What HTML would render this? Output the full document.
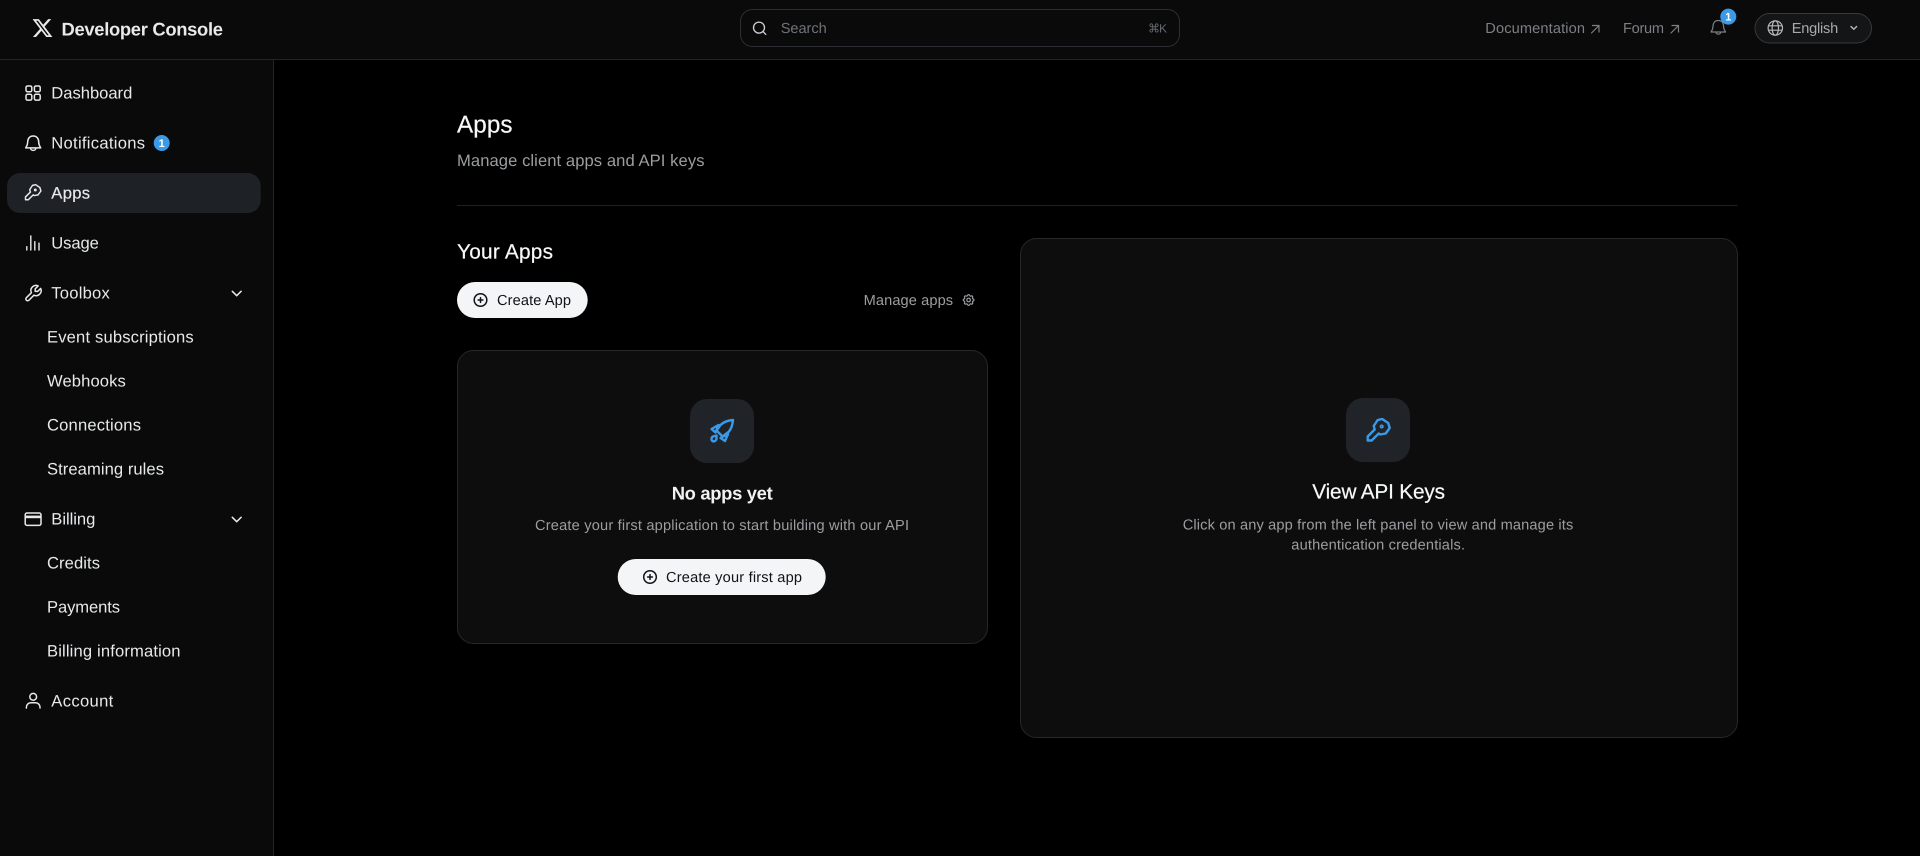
<!DOCTYPE html>
<html lang="en">
<head>
<meta charset="utf-8">
<title>Developer Console</title>
<style>
html,body{margin:0;padding:0;background:#000;width:1920px;height:856px;overflow:hidden}
svg{display:block;position:absolute;left:0;top:0}
text{font-family:"Liberation Sans","DejaVu Sans",sans-serif;text-rendering:geometricPrecision}
.nav{font-size:16.6px;fill:#e7e9ea}
.m{stroke:currentColor;stroke-width:.2}
.ic{fill:none;stroke:#e7e9ea;stroke-width:1.5;stroke-linecap:round;stroke-linejoin:round}
.gr{fill:none;stroke:#7c7f83;stroke-width:1.2;stroke-linecap:round;stroke-linejoin:round}
.bl{fill:none;stroke:#3b9ae8;stroke-width:2.4;stroke-linecap:round;stroke-linejoin:round}
.dk{fill:none;stroke:#0f1419;stroke-width:1.5;stroke-linecap:round;stroke-linejoin:round}
</style>
</head>
<body>
<svg width="1920" height="856" viewBox="0 0 1920 856" xmlns="http://www.w3.org/2000/svg">
<rect width="1920" height="856" fill="#000"/>
<!-- header + sidebar -->
<rect x="0" y="0" width="1920" height="60" fill="#0a0a0b"/>
<rect x="0" y="60" width="273" height="796" fill="#0a0a0b"/>
<rect x="0" y="59" width="1920" height="1" fill="#212326"/>
<rect x="273" y="60" width="1" height="796" fill="#212326"/>

<!-- logo -->
<path transform="translate(31.4 17) scale(.92)" fill="#e7e9ea" d="M18.244 2.25h3.308l-7.227 8.26 8.502 11.24H16.17l-5.214-6.817L4.99 21.75H1.68l7.73-8.835L1.254 2.25H8.08l4.713 6.231zm-1.161 17.52h1.833L7.084 4.126H5.117z"/>
<text x="61.5" y="35.5" font-size="18.4" font-weight="700" fill="#e7e9ea" textLength="161.5">Developer Console</text>

<!-- search -->
<rect x="740.5" y="9.5" width="439" height="37" rx="12" fill="#0a0a0b" stroke="#2b2e32"/>
<circle cx="759" cy="27.6" r="5.5" fill="none" stroke="#cfd1d3" stroke-width="1.3"/>
<path d="M763 31.6L765.8 34.4" fill="none" stroke="#cfd1d3" stroke-width="1.3" stroke-linecap="round"/>
<text x="780.7" y="33" font-size="14.6" fill="#6f7276" textLength="46">Search</text>
<text x="1148" y="32.7" font-size="12" fill="#65686c" textLength="19">⌘K</text>

<!-- top right -->
<text x="1485.3" y="33" font-size="14.6" fill="#7c7f83" textLength="99.7">Documentation</text>
<path class="gr" d="M1591.5 33L1599 25.5M1592.5 25.5H1599V32"/>
<text x="1623" y="33" font-size="14.6" fill="#7c7f83" textLength="41">Forum</text>
<path class="gr" d="M1671 33L1678.5 25.5M1672 25.5H1678.5V32"/>
<path class="gr" d="M1718.3 20.5c-3.8 0-5.3 2.9-5.3 5.8c0 3-1 4.2-2 5.7h14.6c-1-1.5-2-2.7-2-5.7c0-2.9-1.5-5.8-5.3-5.8zM1716 32.2c0 2.6 4.6 2.6 4.6 0"/>
<circle cx="1728.3" cy="16.6" r="8" fill="#3b9ae8"/>
<text x="1728.3" y="20.6" font-size="11" font-weight="700" fill="#fff" text-anchor="middle">1</text>
<rect x="1755" y="13.5" width="116.5" height="29.5" rx="14.7" fill="#141517" stroke="#36393d"/>
<g fill="none" stroke="#b5b7b9" stroke-width="1.2">
<circle cx="1775.3" cy="28" r="7.2"/>
<ellipse cx="1775.3" cy="28" rx="3.2" ry="7.2"/>
<path d="M1768.3 25.8h14M1768.3 30.2h14"/>
</g>
<text x="1791.7" y="33" font-size="14.6" fill="#a8aaac" textLength="46.5">English</text>
<path d="M1851 26.5l2.8 2.8 2.8-2.8" fill="none" stroke="#b5b7b9" stroke-width="1.4" stroke-linecap="round" stroke-linejoin="round"/>

<!-- sidebar active -->
<rect x="7" y="173" width="253.7" height="40" rx="13" fill="#1e2125"/>

<!-- sidebar icons -->
<g class="ic">
<rect x="26" y="86" width="5.8" height="5.8" rx="1.5"/><rect x="34.4" y="86" width="5.8" height="5.8" rx="1.5"/>
<rect x="26" y="94.3" width="5.8" height="5.8" rx="1.5"/><rect x="34.4" y="94.3" width="5.8" height="5.8" rx="1.5"/>
<path d="M33.2 136c-3.9 0-5.5 3-5.5 6c0 3.1-1.1 4.4-2 5.9h15c-1-1.5-2-2.8-2-5.9c0-3-1.6-6-5.5-6zM30.6 148.2c0 2.9 5.2 2.9 5.2 0"/>
<g transform="translate(24.8 184) scale(.7)" style="stroke-width:2.1"><path d="M7 8L11 2L15.5 1L21.5 5L23 10L19 15.5L13.5 16.5L12 15.5L5 22.5H1V18.5L8 11.5Z"/><circle cx="15" cy="8.5" r="1"/></g>
<path d="M26.8 246.7V250M30.8 236V250M34.8 241.7V250M39 243.2V250" style="stroke-width:1.4"/>
<g transform="translate(43.6 283) scale(-.84 .84)" style="stroke-width:1.78"><path d="M7 10h3v-3l-3.5-3.5a6 6 0 0 1 8 8l6 6a2 2 0 0 1-3 3l-6-6a6 6 0 0 1-8-8l3.5 3.5"/></g>
<path d="M232.3 291.3l4.4 4.4 4.4-4.4M232.3 517.3l4.4 4.4 4.4-4.4"/>
<rect x="25.2" y="513" width="15.8" height="12.4" rx="1.8"/>
<circle cx="33.2" cy="696.8" r="3.4"/>
<path d="M26.4 708v-.8a4.4 4.4 0 0 1 4.4-4.4h4.8a4.4 4.4 0 0 1 4.4 4.4v.8"/>
</g>
<rect x="25.2" y="515.6" width="15.8" height="2.6" fill="#e7e9ea"/>

<!-- sidebar text -->
<text class="nav" x="51.3" y="98.5" textLength="81">Dashboard</text>
<text class="nav" x="51.3" y="148.7" textLength="93.7">Notifications</text>
<circle cx="161.7" cy="143" r="8" fill="#3b9ae8"/>
<text x="161.7" y="147" font-size="11" font-weight="700" fill="#fff" text-anchor="middle">1</text>
<text class="nav m" x="51.3" y="198.7" textLength="38.8" style="color:#e7e9ea">Apps</text>
<text class="nav" x="51.3" y="248.7" textLength="47.5">Usage</text>
<text class="nav" x="51.3" y="298.7" textLength="58.5">Toolbox</text>
<text class="nav" x="47" y="342.7" textLength="146.7">Event subscriptions</text>
<text class="nav" x="47" y="386.7" textLength="78.8">Webhooks</text>
<text class="nav" x="47" y="430.7" textLength="94">Connections</text>
<text class="nav" x="47" y="474.7" textLength="117">Streaming rules</text>
<text class="nav" x="51.3" y="524.7" textLength="44">Billing</text>
<text class="nav" x="47" y="568.7" textLength="53">Credits</text>
<text class="nav" x="47" y="612.7" textLength="73">Payments</text>
<text class="nav" x="47" y="656.7" textLength="133.5">Billing information</text>
<text class="nav" x="51.3" y="706.7" textLength="62">Account</text>

<!-- page head -->
<text class="m" x="457" y="132.7" font-size="24.2" fill="#f7f9f9" textLength="55.5" style="color:#f7f9f9">Apps</text>
<text x="457" y="166" font-size="16.6" fill="#9b9ea1" textLength="247.5">Manage client apps and API keys</text>
<rect x="457" y="205" width="1280.5" height="1" fill="#1e2023"/>

<!-- your apps -->
<text class="m" x="457" y="258.7" font-size="20.8" fill="#f7f9f9" textLength="96" style="color:#f7f9f9">Your Apps</text>
<rect x="457" y="282" width="130.7" height="36" rx="18" fill="#f3f5f6"/>
<g class="dk"><circle cx="480.5" cy="300" r="6.3"/><path d="M480.5 297.6v4.8M478.1 300h4.8"/></g>
<text x="497" y="305" font-size="14.6" fill="#0f1419" textLength="74">Create App</text>
<text x="863.6" y="305" font-size="14.6" fill="#9b9ea1" textLength="89.5">Manage apps</text>
<g transform="translate(961.4 292.8) scale(.6)" fill="none" stroke="#9b9ea1" stroke-width="2" stroke-linecap="round" stroke-linejoin="round">
<path d="M10.325 4.317c.426-1.756 2.924-1.756 3.35 0a1.724 1.724 0 0 0 2.573 1.066c1.543-.94 3.31.826 2.37 2.37a1.724 1.724 0 0 0 1.065 2.572c1.756.426 1.756 2.924 0 3.35a1.724 1.724 0 0 0-1.066 2.573c.94 1.543-.826 3.31-2.37 2.37a1.724 1.724 0 0 0-2.572 1.065c-.426 1.756-2.924 1.756-3.35 0a1.724 1.724 0 0 0-2.573-1.066c-1.543.94-3.31-.826-2.37-2.37a1.724 1.724 0 0 0-1.065-2.572c-1.756-.426-1.756-2.924 0-3.35a1.724 1.724 0 0 0 1.066-2.573c-.94-1.543.826-3.31 2.37-2.37c1 .608 2.296.07 2.572-1.065z"/>
<circle cx="12" cy="12" r="3"/>
</g>

<!-- left card -->
<rect x="457.5" y="350.5" width="530" height="293" rx="16" fill="#0d0d0e" stroke="#25272b"/>
<rect x="690" y="399" width="64" height="64" rx="17" fill="#202328"/>
<g class="bl" transform="translate(710 419)">
<path d="M23 1C17 1.5 13 3.5 10.5 6L6.5 11.5L12.5 17.5L18.5 13C21 10.5 22.5 6 23 1Z"/>
<path d="M8.5 6L1.5 10L5.5 13.5ZM18 15L15 22L10.5 19Z"/>
<path d="M6.5 16.5L3 17.5C1 18.5 1 21.5 3 22.3C5 22.8 6.5 21 6.5 19.5Z"/>
</g>
<text x="671.7" y="499.3" font-size="18.4" font-weight="700" fill="#f0f2f3" textLength="101">No apps yet</text>
<text x="535" y="530" font-size="14.6" fill="#9b9ea1" textLength="374">Create your first application to start building with our API</text>
<rect x="617.7" y="559" width="208" height="36" rx="18" fill="#f3f5f6"/>
<g class="dk"><circle cx="650" cy="577" r="6.3"/><path d="M650 574.6v4.8M647.6 577h4.8"/></g>
<text x="666" y="582" font-size="14.6" fill="#0f1419" textLength="136">Create your first app</text>

<!-- right card -->
<rect x="1020.5" y="238.5" width="717" height="499" rx="16" fill="#0d0d0e" stroke="#25272b"/>
<rect x="1346" y="398" width="64" height="64" rx="17" fill="#202328"/>
<g class="bl" transform="translate(1366.7 418)">
<path d="M7 8L11 2L15.5 1L21.5 5L23 10L19 15.5L13.5 16.5L12 15.5L5 22.5H1V18.5L8 11.5Z"/>
<circle cx="15" cy="8.5" r=".8"/>
</g>
<text class="m" x="1312.3" y="498.3" font-size="20.8" fill="#f7f9f9" textLength="132.7" style="color:#f7f9f9">View API Keys</text>
<text x="1182.7" y="529.3" font-size="14.6" fill="#9b9ea1" textLength="390.6">Click on any app from the left panel to view and manage its</text>
<text x="1291.3" y="549.3" font-size="14.6" fill="#9b9ea1" textLength="173.7">authentication credentials.</text>
</svg>
</body>
</html>
